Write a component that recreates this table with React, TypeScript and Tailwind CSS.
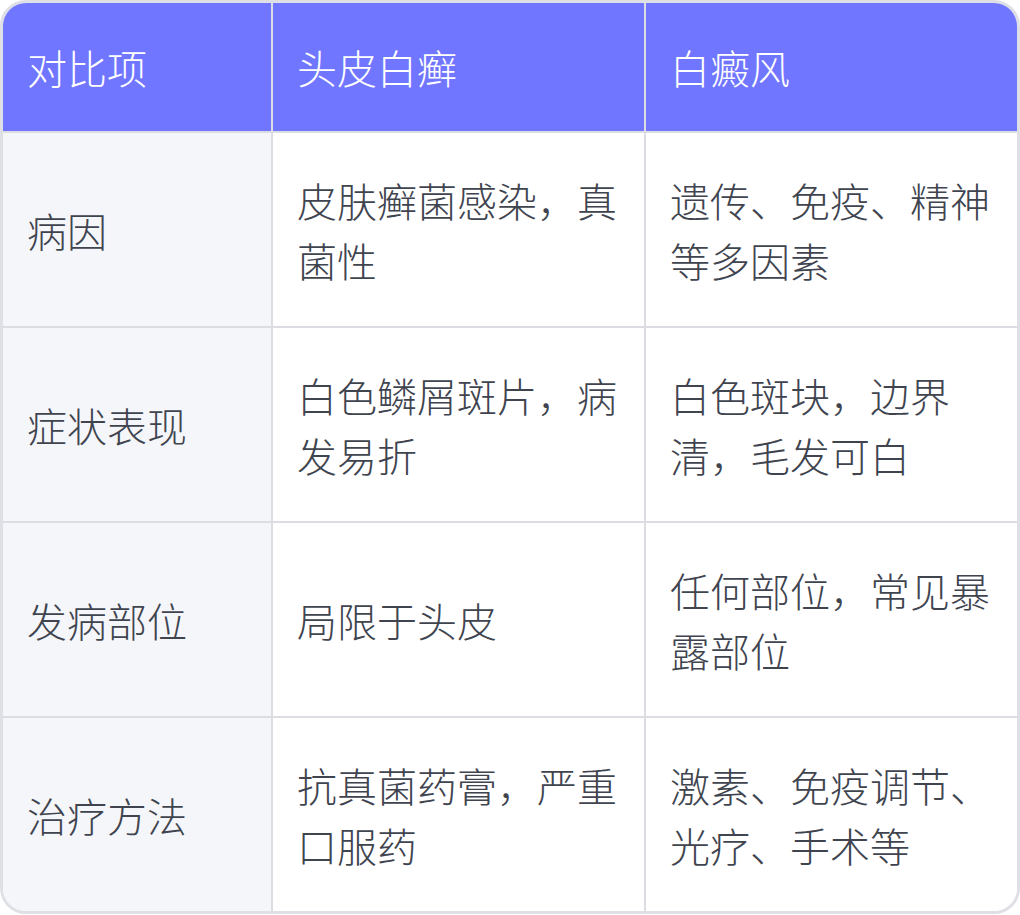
const header = ["对比项", "头皮白癣", "白癜风"];

const rows = [
  ["病因", "皮肤癣菌感染，真菌性", "遗传、免疫、精神等多因素"],
  ["症状表现", "白色鳞屑斑片，病发易折", "白色斑块，边界清，毛发可白"],
  ["发病部位", "局限于头皮", "任何部位，常见暴露部位"],
  ["治疗方法", "抗真菌药膏，严重口服药", "激素、免疫调节、光疗、手术等"],
];

export default function App() {
  return (
    <div
      className="w-[1020px] h-[915px] bg-white"
      style={{ fontFamily: '"Noto Sans CJK SC", "Noto Sans", sans-serif' }}
    >
      <div className="rounded-[26px] border-[3px] border-[#dfe0e6] overflow-hidden">
        <div className="grid grid-cols-[270px_373px_1fr] text-[40px] leading-[60px] font-light">
          {header.map((h, i) => (
            <div
              key={h}
              className={
                "bg-[#7076ff] text-white px-6 py-[34px] border-b-2 border-[#dcdde3] " +
                (i < 2 ? "border-r-2" : "")
              }
            >
              {h}
            </div>
          ))}
          {rows.map((r, ri) =>
            r.map((c, ci) => (
              <div
                key={ri + "-" + ci}
                className={
                  "flex items-center px-6 py-[36.5px] text-[#40444f] border-[#dcdde3] " +
                  (ci === 0 ? "bg-[#f5f6fa] " : "bg-white ") +
                  (ci < 2 ? "border-r-2 " : "") +
                  (ri < rows.length - 1 ? "border-b-2" : "")
                }
              >
                <span>{c}</span>
              </div>
            ))
          )}
        </div>
      </div>
    </div>
  );
}
